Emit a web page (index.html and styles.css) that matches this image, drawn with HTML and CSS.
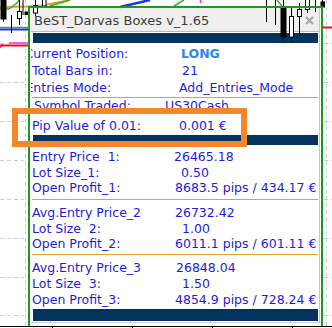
FILE: index.html
```html
<!DOCTYPE html>
<html lang="en">
<head>
  <meta charset="UTF-8" />
  <title>BeST_Darvas Boxes</title>
  <link rel="stylesheet" href="styles.css">
</head>
<body>
  <div class="chart">
    <div class="panel">
      <div class="title-bar">
        <span class="title">BeST_Darvas Boxes v_1.65</span>
        <svg class="close" width="9" height="9" viewBox="0 0 9 9"><path d="M1 1L8 8M8 1L1 8" stroke="#a8a8a8" stroke-width="2.2"/></svg>
      </div>
      <div class="bar bar-top"></div>

      <div class="rows g1">
        <div class="row"><span class="label in-8">Current Position:</span><span class="value long pad-7">LONG</span></div>
        <div class="row"><span class="label">Total Bars in:</span><span class="value pad-8">21</span></div>
        <div class="row"><span class="label in-7">Entries Mode:</span><span class="value pad-5">Add_Entries_Mode</span></div>
      </div>
      <div class="sep sep-1"></div>
      <div class="rows">
        <div class="row symbol"><span class="label in-2">Symbol Traded:</span><span class="value back-9">US30Cash</span></div>
        <div class="row pip"><span class="label">Pip Value of 0.01:</span><span class="value pad-5">0.001 €</span></div>
      </div>
      <div class="bar bar-mid"></div>

      <div class="rows g2">
        <div class="row"><span class="label">Entry Price  1:</span><span class="value">26465.18</span></div>
        <div class="row tight"><span class="label">Lot Size_1:</span><span class="value pad-7">0.50</span></div>
        <div class="row"><span class="label">Open Profit_1:</span><span class="value pad-1">8683.5 pips / 434.17 €</span></div>
      </div>
      <div class="sep sep-2"></div>

      <div class="rows g3">
        <div class="row"><span class="label">Avg.Entry Price_2</span><span class="value pad-1">26732.42</span></div>
        <div class="row tight"><span class="label">Lot Size  2:</span><span class="value pad-8">1.00</span></div>
        <div class="row"><span class="label">Open Profit_2:</span><span class="value pad-1">6011.1 pips / 601.11 €</span></div>
      </div>
      <div class="sep sep-3"></div>

      <div class="rows g4">
        <div class="row"><span class="label">Avg.Entry Price_3</span><span class="value pad-2">26848.04</span></div>
        <div class="row"><span class="label">Lot Size  3:</span><span class="value pad-8">1.50</span></div>
        <div class="row tight"><span class="label">Open Profit_3:</span><span class="value pad-1">4854.9 pips / 728.24 €</span></div>
      </div>
      <div class="bar bar-bottom"></div>
    </div>

    <!-- chart drawing: grid, averages, candles, box -->
    <svg class="chart-layer" width="332" height="328" viewBox="0 0 332 328">
      <g stroke="#cacaf0" stroke-width="1" stroke-dasharray="4 3" fill="none">
        <path d="M25.5 0V326M326.5 0V326"/>
        <path d="M0 43.5H24M0 82.5H24M0 121.5H24M0 160.5H24M0 199.5H24M0 238.5H24M0 277.5H24M0 315.5H24"/>
        <path d="M324 43.5H332M324 82.5H332M324 121.5H332M324 160.5H332M324 199.5H332M324 238.5H332M324 277.5H332M324 315.5H332"/>
      </g>

      <g fill="none" stroke-linejoin="round">
        <polyline points="0,7 27,6.5 43,5.5 55,3 70,0" stroke="#f29a1c" stroke-width="2"/>
        <polyline points="0,9 9,9 17,3 19,0" stroke="#2fb02f" stroke-width="1.5"/>
        <polyline points="50,6 60,3 70,0" stroke="#2fb02f" stroke-width="1.5"/>
        <polyline points="174,6 184,0" stroke="#2fb02f" stroke-width="1.5"/>
        <polyline points="277,0 282,6" stroke="#2fb02f" stroke-width="1.5"/>
        <polyline points="120,7 150,0" stroke="#1d35e8" stroke-width="2.5"/>
        <path d="M0 27.5H28" stroke="#2fb02f" stroke-width="1.5"/>
        <path d="M0 29.5H28" stroke="#1d35e8" stroke-width="2"/>
        <path d="M9 43H28" stroke="#ff22ff" stroke-width="1.5"/>
        <path d="M0 48L3 44" stroke="#ff22ff" stroke-width="1.5"/>
        <path d="M0 45.5H28" stroke="#e81010" stroke-width="2"/>
        <path d="M323 27.5H332" stroke="#e81010" stroke-width="2"/>
        <path d="M200.5 0V3" stroke="#ff22ff" stroke-width="1.5"/>
      </g>

      <g stroke="#000" stroke-width="1">
        <path d="M3.5 0V22M11.5 15V33M19.5 0V25M23 0V15M35.5 0V16M44 0V8"/>
        <rect x="1" y="0" width="5" height="19" fill="#000"/>
        <rect x="17.5" y="11.5" width="4" height="7" fill="#fff"/>
        <rect x="25" y="12" width="3.5" height="2.5" fill="#000"/>
        <rect x="33.5" y="5.5" width="4" height="7.5" fill="#fff"/>
        <rect x="42.5" y="-1" width="3.5" height="7" fill="#fff"/>

        <path d="M266.5 0V22M275.5 0V25M283.5 0V43M291.5 7V43M299.5 3V36M307.5 0V13M315.5 0V12M322.5 0V10"/>
        <rect x="281" y="7" width="5" height="30" fill="#000"/>
        <rect x="289.5" y="16.5" width="4" height="20.5" fill="#fff"/>
        <rect x="297.5" y="9.5" width="4" height="7" fill="#fff"/>
        <rect x="305.5" y="-1" width="4" height="10.5" fill="#fff"/>
        <rect x="321" y="2" width="3.5" height="5" fill="#000"/>
      </g>

      <path d="M29 326V7H322V326" fill="none" stroke="#1c9a1c" stroke-width="2"/>
      <path d="M0 326.5H332" stroke="#000" stroke-width="1"/>
      <path d="M52.5 327V328M132.5 327V328M212.5 327V328M292.5 327V328" stroke="#000" stroke-width="1"/>
    </svg>

    <div class="highlight"></div>
  </div>
</body>
</html>
```

FILE: styles.css
```css
* {
  box-sizing: border-box;
  margin: 0;
  padding: 0;
}

body {
  background: #fff;
  font-family: "DejaVu Sans", Verdana, sans-serif;
}

.chart {
  position: relative;
  width: 332px;
  height: 328px;
  overflow: hidden;
  padding: 8px 0 0 31px;
  background: #fff;
}

.panel {
  position: relative;
  width: 289px;
  background: #fff;
  border-right: 1px solid #c6c6c6;
  border-bottom: 1px solid #d0d0d0;
  padding-bottom: 1px;
  overflow: hidden;
}

.title-bar {
  display: flex;
  align-items: flex-start;
  height: 24px;
  padding: 2px 5px 0 3px;
  background: #efefef;
  border-bottom: 1px solid #b8b8b8;
  font-size: 13px;
  line-height: 21px;
  color: #3c3c3c;
  white-space: nowrap;
}

.title-bar .close {
  display: block;
  margin: 6px 0 0 auto;
}

.bar {
  background: #03335f;
  margin-left: 2px;
  margin-right: 1px;
}

.bar-top {
  height: 10px;
  margin-top: 1px;
}

.bar-mid {
  height: 10px;
  margin-top: 1px;
}

.bar-bottom {
  height: 12px;
  margin-top: 2px;
}

.rows {
  padding-left: 1px;
}

.row {
  display: flex;
  height: 16px;
  line-height: 16px;
  font-size: 12.5px;
  color: #1c1cdc;
  white-space: pre;
}

.row.tight {
  height: 15px;
  line-height: 15px;
}

.g1 {
  margin-top: 2px;
}

.g1 .row {
  height: 17px;
  line-height: 17px;
}

.g2 {
  margin-top: 4px;
}

.g3,
.g4 {
  margin-top: 5px;
}

.row.pip {
  margin-top: 4px;
}

.label {
  flex: none;
  width: 142px;
}

.label.in-8 { text-indent: -7.5px; }
.label.in-7 { text-indent: -6.6px; }
.label.in-2 { text-indent: 2px; }

.value.pad-1 { padding-left: 1px; }
.value.pad-2 { padding-left: 2px; }
.value.pad-5 { padding-left: 5px; }
.value.pad-7 { padding-left: 7px; }
.value.pad-8 { padding-left: 8px; }
.value.back-9 { margin-left: -9px; }

.value.long {
  font-weight: bold;
  color: #2a8ae8;
}

.sep {
  height: 1px;
  background: #dba52a;
  margin-left: 1px;
  margin-right: 1px;
}

.sep-1 { margin-top: 1px; }
.sep-2 { margin-top: 3px; }
.sep-3 { margin-top: 2px; }

.chart-layer {
  position: absolute;
  top: 0;
  left: 0;
  pointer-events: none;
}

.highlight {
  position: absolute;
  left: 12px;
  top: 108px;
  width: 235px;
  height: 39px;
  border: 6px solid #f5862a;
}
```
